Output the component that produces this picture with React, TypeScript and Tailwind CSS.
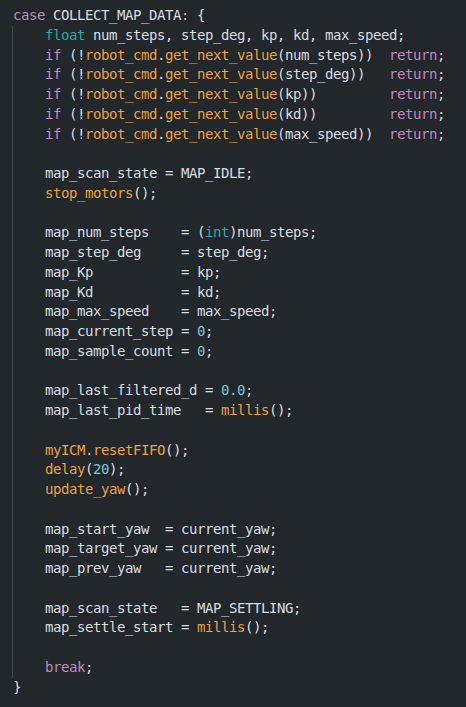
type Tok = [string, string?];

const KW = "text-[#c586c0]";
const TY = "text-[#2aa7a7]";
const FN = "text-[#eea03a]";
const NU = "text-[#7fc6cf]";

const pad = (s: string, n: number) => s + " ".repeat(Math.max(1, n - s.length));

const getLine = (arg: string): Tok[] => {
  const call = `(!robot_cmd.get_next_value(${arg}))`;
  return [
    ["if", KW],
    [" (!"],
    ["robot_cmd", FN],
    ["."],
    ["get_next_value", FN],
    [`(${arg}))`],
    [" ".repeat(Math.max(2, 40 - call.length))],
    ["return", KW],
    [";"],
  ];
};

const assign = (name: string, width: number, value: Tok[]): Tok[] => [
  [pad(name, width) + "= "],
  ...value,
];

const body: Tok[][] = [
  [["float", TY], [" num_steps, step_deg, kp, kd, max_speed;"]],
  getLine("num_steps"),
  getLine("step_deg"),
  getLine("kp"),
  getLine("kd"),
  getLine("max_speed"),
  [],
  [["map_scan_state = MAP_IDLE;"]],
  [["stop_motors", FN], ["();"]],
  [],
  assign("map_num_steps", 17, [["("], ["int", TY], [")num_steps;"]]),
  assign("map_step_deg", 17, [["step_deg;"]]),
  assign("map_Kp", 17, [["kp;"]]),
  assign("map_Kd", 17, [["kd;"]]),
  assign("map_max_speed", 17, [["max_speed;"]]),
  assign("map_current_step", 17, [["0", NU], [";"]]),
  [["map_sample_count = "], ["0", NU], [";"]],
  [],
  assign("map_last_filtered_d", 20, [["0.0", NU], [";"]]),
  assign("map_last_pid_time", 20, [["millis", FN], ["();"]]),
  [],
  [["myICM", FN], ["."], ["resetFIFO", FN], ["();"]],
  [["delay", FN], ["("], ["20", NU], [");"]],
  [["update_yaw", FN], ["();"]],
  [],
  assign("map_start_yaw", 15, [["current_yaw;"]]),
  assign("map_target_yaw", 15, [["current_yaw;"]]),
  assign("map_prev_yaw", 15, [["current_yaw;"]]),
  [],
  assign("map_scan_state", 17, [["MAP_SETTLING;"]]),
  assign("map_settle_start", 17, [["millis", FN], ["();"]]),
  [],
  [["break", KW], [";"]],
];

const Line = ({ toks }: { toks: Tok[] }) => (
  <div className="h-[19.75px] whitespace-pre">
    {toks.length === 0 ? " " : toks.map(([t, c], i) => <span key={i} className={c}>{t}</span>)}
  </div>
);

export default function App() {
  return (
    <div
      className="h-[707px] w-[466px] overflow-hidden bg-[#22272b] pl-[13px] pt-[6px] text-[14px] leading-[19.75px] tracking-[-0.43px] text-[#d9dde3]"
      style={{ fontFamily: '"DejaVu Sans Mono", "Liberation Mono", monospace' }}
    >
      <Line toks={[["case", KW], [" COLLECT_MAP_DATA: {"]]} />
      <div className="-ml-px border-l border-[#40454a] pl-[32px]">
        {body.map((toks, i) => (
          <Line key={i} toks={toks} />
        ))}
      </div>
      <Line toks={[["}"]]} />
    </div>
  );
}
